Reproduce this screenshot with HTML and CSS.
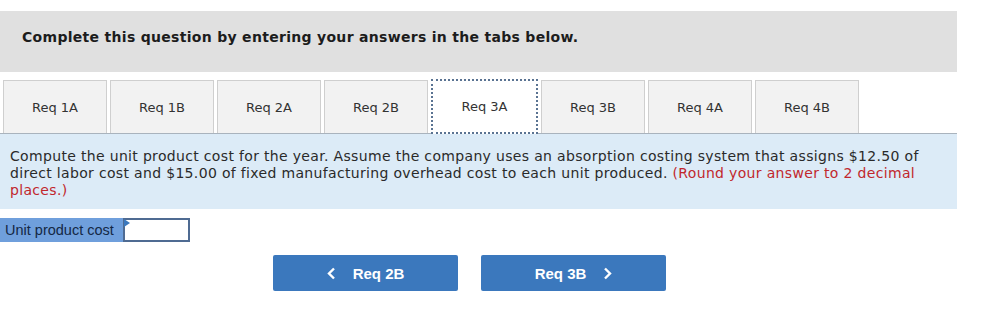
FILE: index.html
```html
<!DOCTYPE html>
<html lang="en">
<head>
    <meta charset="UTF-8">
    <meta name="viewport" content="width=device-width, initial-scale=1.0">
    <title>Req 3A</title>
    <link rel="stylesheet" href="styles.css">
</head>
<body>
    <div class="page">
        <div class="header">Complete this question by entering your answers in the tabs below.</div>

        <div class="tabs">
            <div class="tab">Req 1A</div>
            <div class="tab">Req 1B</div>
            <div class="tab">Req 2A</div>
            <div class="tab">Req 2B</div>
            <div class="tab active">Req 3A</div>
            <div class="tab">Req 3B</div>
            <div class="tab">Req 4A</div>
            <div class="tab">Req 4B</div>
        </div>

        <div class="question">
            Compute the unit product cost for the year. Assume the company uses an absorption costing system that assigns $12.50 of direct labor cost and $15.00 of fixed manufacturing overhead cost to each unit produced. <span class="note">(Round your answer to 2 decimal places.)</span>
        </div>

        <div class="answer">
            <span class="label">Unit product cost</span>
            <span class="input"></span>
        </div>

        <div class="nav">
            <button class="btn">
                <svg width="9" height="13" viewBox="0 0 9 13"><path d="M7 1.5 L2 6.5 L7 11.5" fill="none" stroke="#fff" stroke-width="2.4"/></svg>
                <span>Req 2B</span>
            </button>
            <button class="btn">
                <span>Req 3B</span>
                <svg width="9" height="13" viewBox="0 0 9 13"><path d="M2 1.5 L7 6.5 L2 11.5" fill="none" stroke="#fff" stroke-width="2.4"/></svg>
            </button>
        </div>
    </div>
</body>
</html>
```

FILE: styles.css
```css
body {
    margin: 0;
    background: #fff;
    font-family: "DejaVu Sans", Verdana, sans-serif;
    color: #222;
}
.page {
    width: 957px;
    padding-top: 11px;
}
.header {
    background: #e0e0e0;
    height: 61px;
    box-sizing: border-box;
    padding: 18px 0 0 22px;
    font-size: 14px;
    letter-spacing: 0.3px;
    font-weight: bold;
    color: #1c1c1c;
}
.tabs {
    display: flex;
    gap: 3px;
    padding-left: 3px;
    margin-top: 8px;
    height: 53px;
    border-bottom: 1px solid #a9b3bd;
}
.tab {
    width: 104px;
    box-sizing: border-box;
    height: 53px;
    background: #f2f2f2;
    border: 1px solid #cfcfcf;
    border-bottom: none;
    display: flex;
    align-items: center;
    justify-content: center;
    font-size: 13px;
    color: #333;
}
.tab.active {
    background: #fff;
    border: 2px dotted #5a7392;
    height: 55px;
    margin-top: -1px;
    width: 107px;
    position: relative;
    z-index: 1;
}
.question {
    background: #dcebf7;
    padding: 14px 22px 8px 10px;
    height: 75px;
    box-sizing: border-box;
    font-size: 14px;
    letter-spacing: 0.33px;
    line-height: 17px;
    color: #2a2a2a;
}
.note { color: #c1272d; }
.answer {
    display: flex;
    margin-top: 9px;
    height: 24px;
}
.label {
    background: #6f9fdc;
    color: #142845;
    font-family: "Liberation Sans", Arial, sans-serif;
    font-size: 14.5px;
    line-height: 24px;
    padding: 0 6px 0 5px;
    width: 123px;
    box-sizing: border-box;
    white-space: nowrap;
}
.input {
    width: 67px;
    box-sizing: border-box;
    border: 2px solid #4f6b92;
    background: #fff;
    position: relative;
}
.input::before {
    content: "";
    position: absolute;
    left: -1px;
    top: -1px;
    border-left: 6px solid #3b78bd;
    border-top: 4px solid transparent;
    border-bottom: 4px solid transparent;
}
.nav {
    display: flex;
    gap: 23px;
    margin: 13px 0 0 273px;
}
.btn {
    width: 185px;
    height: 36px;
    background: #3b78bd;
    color: #fff;
    border: none;
    border-radius: 2px;
    font-family: "Liberation Sans", Arial, sans-serif;
    font-weight: bold;
    font-size: 15px;
    display: flex;
    align-items: center;
    justify-content: center;
    gap: 17px;
    padding: 0;
}
.btn svg { display: block; }
```
